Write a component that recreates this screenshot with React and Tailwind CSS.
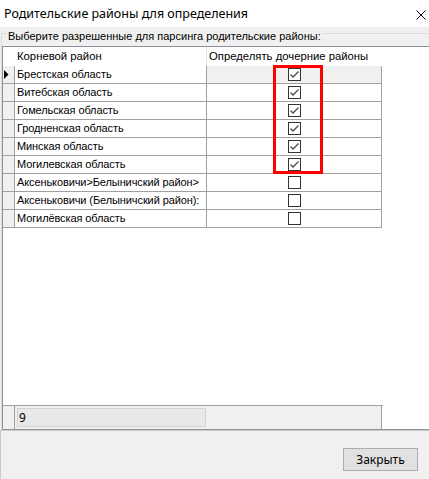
import React from "react";

const regions = [
  { name: "Брестская область", on: true, current: true },
  { name: "Витебская область", on: true },
  { name: "Гомельская область", on: true },
  { name: "Гродненская область", on: true },
  { name: "Минская область", on: true },
  { name: "Могилевская область", on: true },
  { name: "Аксеньковичи>Белыничский район>", on: false },
  { name: "Аксеньковичи (Белыничский район):", on: false },
  { name: "Могилёвская область", on: false },
];

function CheckBox({ checked }) {
  return (
    <div className="w-[13px] h-[13px] border border-[#333333] bg-white flex items-center justify-center">
      {checked && (
        <svg width="11" height="11" viewBox="0 0 11 11">
          <polyline
            points="1.5,5.5 4,8 9.5,2.5"
            fill="none"
            stroke="#4a4a4a"
            strokeWidth="1.3"
          />
        </svg>
      )}
    </div>
  );
}

function Row({ row }) {
  return (
    <div className="flex h-[18px] shrink-0">
      <div className="w-[12px] bg-[#f0f0f0] border-r border-b border-[#a0a0a0] flex items-center pl-[1px]">
        {row.current && (
          <svg width="5" height="9" viewBox="0 0 5 9">
            <polygon points="0,0 4.5,4.5 0,9" fill="#000" />
          </svg>
        )}
      </div>
      <div className="w-[192px] border-r border-b border-[#a0a0a0] flex items-center pl-[2px] overflow-hidden whitespace-nowrap font-['Liberation_Sans',sans-serif] text-[11px] tracking-[-0.1px] text-black">
        {row.name}
      </div>
      <div
        className={
          "w-[175px] border-r border-b border-[#a0a0a0] flex items-center justify-center " +
          (row.current ? "bg-[#f0f0f0]" : "bg-white")
        }
      >
        <CheckBox checked={row.on} />
      </div>
    </div>
  );
}

export default function App() {
  return (
    <div className="relative w-[429px] h-[479px] bg-[#f0f0f0] flex flex-col overflow-hidden font-['Liberation_Sans',sans-serif] text-black">
      {/* title bar */}
      <div className="h-[27px] shrink-0 bg-white flex items-center justify-between pl-[4px] pr-[3px]">
        <span className="text-[12.5px] leading-[16px] font-['Noto_Sans',sans-serif]">
          Родительские районы для определения
        </span>
        <svg width="10" height="10" viewBox="0 0 10 10" className="mt-[2px]">
          <path d="M0.5 0.5 L9.5 9.5 M9.5 0.5 L0.5 9.5" stroke="#000" strokeWidth="1" />
        </svg>
      </div>

      {/* group box */}
      <div className="flex-1 flex flex-col min-h-0">
        <div className="h-[19px] shrink-0 flex">
          <div className="w-[6px] ml-[1px] mt-[6px] border-t border-l border-[#dcdcdc]" />
          <span className="text-[11px] leading-[15px] mt-[2px] px-[1px] whitespace-nowrap">
            Выберите разрешенные для парсинга родительские районы:
          </span>
          <div className="flex-1 mt-[6px] border-t border-[#dcdcdc]" />
        </div>

        <div className="flex-1 flex min-h-0 ml-[1px] border-l border-[#dcdcdc]">
          {/* grid */}
          <div className="flex-1 flex flex-col bg-white border-t border-l border-b border-[#8f929a]">
            {/* column headers */}
            <div className="flex h-[19px] shrink-0 text-[11.3px]">
              <div className="w-[12px]" />
              <div className="w-[192px] border-r border-[#e3e3e3] flex items-center pl-[2px]">
                Корневой район
              </div>
              <div className="w-[175px] flex items-center pl-[2px] whitespace-nowrap">
                Определять дочерние районы
              </div>
            </div>

            {regions.map((r, i) => (
              <Row key={i} row={r} />
            ))}

            <div className="flex-1" />

            {/* footer row */}
            <div className="flex h-[24px] shrink-0 w-[380px] border-t border-[#a0a0a0]">
              <div className="w-[12px] bg-[#f0f0f0] border-r border-[#a0a0a0]" />
              <div className="w-[192px] bg-[#f0f0f0] pt-[2px] pb-[2px] pl-[2px] pr-[1px] flex">
                <div className="flex-1 border border-[#d4d4d4] bg-[#e6e8e9] flex items-center pl-[1px] text-[12px] font-['Noto_Sans',sans-serif]">
                  9
                </div>
              </div>
              <div className="w-[175px] bg-[#f0f0f0] border-r border-[#a0a0a0]" />
            </div>
          </div>
        </div>
      </div>

      {/* bottom panel */}
      <div className="h-[49px] shrink-0 border-t border-l border-[#c9c9c9] flex justify-end items-start pt-[17px] pr-[11px]">
        <button className="w-[75px] h-[23px] border border-[#adadad] bg-[#e1e1e1] text-[12px] leading-none flex items-center justify-center font-['Noto_Sans',sans-serif]">
          Закрыть
        </button>
      </div>

      {/* highlight frame */}
      <div className="absolute left-[273px] top-[65px] w-[50px] h-[109px] border-[3px] border-[#ff0000] pointer-events-none" />
    </div>
  );
}
